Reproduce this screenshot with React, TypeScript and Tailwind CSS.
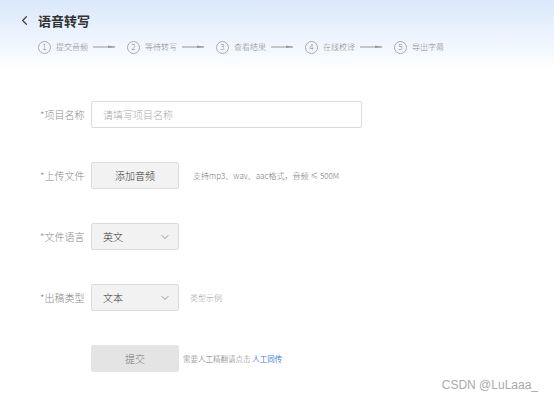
import { ChevronDown, ChevronLeft } from "lucide-react";

const STEPS = ["提交音频", "等待转写", "查看结果", "在线校译", "导出字幕"];

function Arrow() {
  return (
    <svg width="24" height="6" viewBox="0 0 24 6" className="mx-[5px]">
      <line x1="0" y1="3" x2="22" y2="3" stroke="#999" strokeWidth="1" />
      <path d="M15 1.5 L23 3 L15 4 Z" fill="#999" />
    </svg>
  );
}

function Row({ label, children }: { label: string; children: React.ReactNode }) {
  return (
    <div className="flex h-[27px] items-center">
      <span className="w-[51px] text-[10px] font-light text-[#888]">*{label}</span>
      {children}
    </div>
  );
}

function Select({ value }: { value: string }) {
  return (
    <div className="flex h-[27px] w-[88px] items-center justify-between rounded-[2px] border border-[#dcdcdc] bg-[#f2f2f2] pl-[11px] pr-[7px] text-[10px] font-light text-[#333]">
      <span>{value}</span>
      <ChevronDown size={12} strokeWidth={1.5} className="text-[#777]" />
    </div>
  );
}

export default function App() {
  return (
    <div
      className="relative h-[401px] w-[554px] overflow-hidden bg-white"
      style={{ fontFamily: '"Noto Sans CJK SC", "Noto Sans", sans-serif' }}
    >
      <header className="h-[72px] bg-gradient-to-b from-[#dae8fb] to-white pl-[17px] pt-[11px]">
        <div className="flex items-center gap-[6px]">
          <ChevronLeft size={15} strokeWidth={2} className="text-[#444]" />
          <h1 className="text-[13px] font-bold text-[#333]">语音转写</h1>
        </div>
        <div className="mt-[10px] flex items-center pl-[21px] font-light">
          {STEPS.map((s, i) => (
            <div key={s} className="flex items-center">
              <span className="flex h-[13px] w-[13px] items-center justify-center rounded-full border border-[#aaa] text-[8px] leading-none text-[#888]">
                {i + 1}
              </span>
              <span className="ml-[5px] text-[8px] text-[#888]">{s}</span>
              {i < STEPS.length - 1 && <Arrow />}
              {i < STEPS.length - 1 && <span className="w-[5px]" />}
            </div>
          ))}
        </div>
      </header>

      <main className="mt-[29px] flex flex-col gap-[34px] pl-[40px]">
        <Row label="项目名称">
          <input
            placeholder="请填写项目名称"
            className="h-[27px] w-[271px] rounded-[2px] border border-[#dcdcdc] px-[11px] text-[10px] font-light outline-none placeholder:text-[#aaa]"
          />
        </Row>
        <Row label="上传文件">
          <button className="h-[27px] w-[88px] rounded-[2px] border border-[#dcdcdc] bg-[#f2f2f2] text-[10px] font-light text-[#333]">
            添加音频
          </button>
          <span className="ml-[14px] text-[8px] font-light text-[#777]">支持mp3、wav、aac格式，音频 ≤ 500M</span>
        </Row>
        <Row label="文件语言">
          <Select value="英文" />
        </Row>
        <Row label="出稿类型">
          <Select value="文本" />
          <span className="ml-[11px] text-[8px] font-light text-[#999]">类型示例</span>
        </Row>
        <div className="flex h-[27px] items-center pl-[51px]">
          <button className="h-[27px] w-[88px] rounded-[2px] bg-[#e4e4e4] text-[10px] font-light text-[#777]">提交</button>
          <span className="ml-[4px] text-[7.5px] font-light text-[#777]">
            需要人工精翻请点击 <span className="font-normal text-[#3a7bea]">人工同传</span>
          </span>
        </div>
      </main>

      <div
        className="absolute bottom-[7px] right-[16px] text-[12px] text-[#aaa]"
        style={{ fontFamily: '"Liberation Sans", sans-serif' }}
      >
        CSDN @LuLaaa_
      </div>
    </div>
  );
}
